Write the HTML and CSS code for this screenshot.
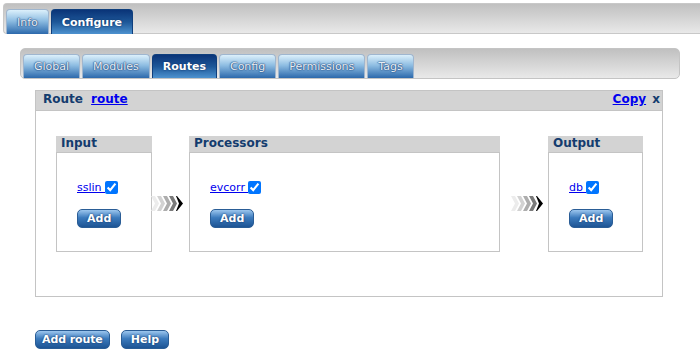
FILE: index.html
```html
<!DOCTYPE html>
<html lang="en">

<head>
    <meta charset="UTF-8">
    <title>Routes</title>
    <link rel="stylesheet" href="styles.css">
</head>

<body>
    <div class="topbar">
        <div class="tab">Info</div>
        <div class="tab active">Configure</div>
    </div>

    <div class="subbar">
        <div class="tab small">Global</div>
        <div class="tab small">Modules</div>
        <div class="tab small active">Routes</div>
        <div class="tab small">Config</div>
        <div class="tab small">Permissions</div>
        <div class="tab small">Tags</div>
    </div>

    <div class="route">
        <div class="route-head">
            <span>Route <a href="#" class="name">route</a></span>
            <span><a href="#" class="name">Copy</a> x</span>
        </div>
        <div class="flow">
            <div class="stage input">
                <div class="stage-head">Input</div>
                <div class="stage-body">
                    <div class="item"><a href="#">sslin </a><input type="checkbox" checked></div>
                    <button class="btn">Add</button>
                </div>
            </div>
            <div class="arrow first">
                <svg width="33" height="15" viewBox="0 0 33 15">
                    <path d="M0 0h4l4 7.5-4 7.5h-4l4-7.5z" fill="#ececec" />
                    <path d="M6 0h4l4 7.5-4 7.5h-4l4-7.5z" fill="#d2d2d2" />
                    <path d="M12 0h4l4 7.5-4 7.5h-4l4-7.5z" fill="#adadad" />
                    <path d="M18 0h4l4 7.5-4 7.5h-4l4-7.5z" fill="#7a7a7a" />
                    <path d="M25 0h1l6 7.5-6 7.5h-1l3-7.5z" fill="#000" />
                </svg>
            </div>
            <div class="stage procs">
                <div class="stage-head">Processors</div>
                <div class="stage-body">
                    <div class="item"><a href="#">evcorr </a><input type="checkbox" checked></div>
                    <button class="btn">Add</button>
                </div>
            </div>
            <div class="arrow second">
                <svg width="33" height="15" viewBox="0 0 33 15">
                    <path d="M0 0h4l4 7.5-4 7.5h-4l4-7.5z" fill="#ececec" />
                    <path d="M6 0h4l4 7.5-4 7.5h-4l4-7.5z" fill="#d2d2d2" />
                    <path d="M12 0h4l4 7.5-4 7.5h-4l4-7.5z" fill="#adadad" />
                    <path d="M18 0h4l4 7.5-4 7.5h-4l4-7.5z" fill="#7a7a7a" />
                    <path d="M25 0h1l6 7.5-6 7.5h-1l3-7.5z" fill="#000" />
                </svg>
            </div>
            <div class="stage output">
                <div class="stage-head">Output</div>
                <div class="stage-body">
                    <div class="item"><a href="#">db </a><input type="checkbox" checked></div>
                    <button class="btn">Add</button>
                </div>
            </div>
        </div>
    </div>

    <div class="actions">
        <button class="btn wide">Add route</button>
        <button class="btn">Help</button>
    </div>
</body>

</html>
```

FILE: styles.css
```css
* {
    margin: 0px;
    padding: 0px;
    box-sizing: border-box;
}

body {
    font-family: "DejaVu Sans", Verdana, sans-serif;
    font-size: 11px;
    background-color: white;
}

.topbar {
    margin: 3px 0px 0px 3px;
    height: 31px;
    padding: 5px 0px 0px 2px;
    display: flex;
    gap: 2px;
    border: 1px solid #c8c8c8;
    border-right: none;
    border-radius: 4px 0px 0px 4px;
    background: linear-gradient(#c0c0c0, #e9e9e9);
}

.subbar {
    margin: 14px 0px 0px 20px;
    width: 660px;
    height: 31px;
    padding: 5px 0px 0px 2px;
    display: flex;
    gap: 2px;
    border: 1px solid #c4c4c4;
    border-radius: 5px;
    background: linear-gradient(#c0c0c0, #e9e9e9);
}

.tab {
    height: 25px;
    padding: 0px 10px;
    display: flex;
    align-items: center;
    color: #e9eef4;
    text-shadow: 0px 0px 1px #234f86, 0px 0px 1px #234f86, 0px 0px 2px #234f86;
    border: 1px solid #9fb6cf;
    border-bottom: none;
    border-radius: 4px 4px 0px 0px;
    background: linear-gradient(#dcf0fb, #8ebde2 45%, #2c69ac);
}

.tab.small {
    height: 24px;
    padding: 0px 10px;
}

.tab.active {
    font-weight: bold;
    color: white;
    text-shadow: 0px 0px 2px #0a2a5c;
    border-color: #0f3f7d;
    background: linear-gradient(#0a3478, #1d5798 50%, #4d92cf);
}

.route {
    margin: 11px 0px 0px 35px;
    width: 628px;
    height: 207px;
    border: 1px solid #c4c4c4;
}

.route-head {
    height: 20px;
    padding: 1px 2px 0px 7px;
    display: flex;
    justify-content: space-between;
    background-color: #d3d3d3;
    border-bottom: 1px solid #c4c4c4;
    font-size: 12px;
    font-weight: bold;
    color: #143c6e;
}

.route-head a {
    color: #0000ee;
    margin-left: 4px;
    margin-right: 2px;
}

.flow {
    display: flex;
    padding: 25px 0px 0px 20px;
}

.stage {
    height: 116px;
    border: 1px solid #c4c4c4;
    border-top: none;
}

.stage-head {
    height: 17px;
    padding-left: 5px;
    background-color: #d3d3d3;
    border-bottom: 1px solid #c4c4c4;
    font-size: 12px;
    font-weight: bold;
    color: #143c6e;
    margin: 0px -1px;
}

.input {
    width: 96px;
}

.procs {
    width: 311px;
}

.output {
    width: 95px;
}

.stage-body {
    padding: 27px 0px 0px 20px;
}

.item {
    display: flex;
    align-items: center;
    height: 15px;
}

.item a {
    color: #0000ee;
    white-space: pre;
}

.item input {
    width: 13px;
    height: 13px;
    margin: 0px;
}

.stage-body .btn {
    margin-top: 14px;
}

.arrow {
    display: flex;
    padding-top: 60px;
}

.arrow.first {
    width: 38px;
    margin-left: -1px;
}

.arrow.second {
    width: 48px;
    padding-left: 11px;
}

.btn {
    height: 19px;
    padding: 0px 9px;
    font-family: "DejaVu Sans", Verdana, sans-serif;
    font-size: 11px;
    font-weight: bold;
    color: white;
    text-shadow: 0px 0px 2px #0b2d5e;
    border: 1px solid #2a5d96;
    border-radius: 5px;
    background: linear-gradient(#9cc6ee, #3c7bbd 45%, #1d5494);
    cursor: pointer;
}

.btn.wide {
    padding: 0px 6px;
    letter-spacing: -0.1px;
}

.actions {
    margin: 33px 0px 0px 35px;
    display: flex;
    gap: 11px;
}
```
